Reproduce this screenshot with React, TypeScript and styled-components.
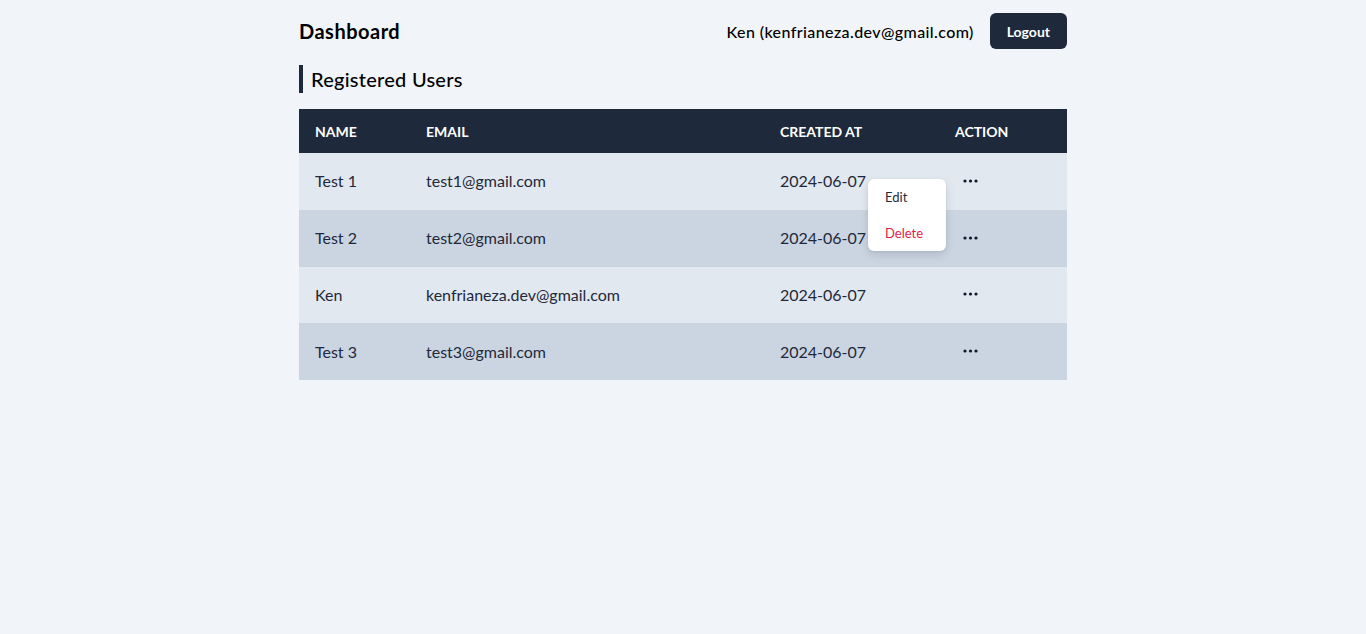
import styled, { createGlobalStyle } from "styled-components";

const GlobalStyle = createGlobalStyle`
  * {
    box-sizing: border-box;
  }
  body {
    margin: 0;
    background: #f1f5f9;
    font-family: "Lato", "Noto Sans", sans-serif;
    color: #0f172a;
  }
`;

interface IUser {
  name: string;
  email: string;
  createdAt: string;
}

const users: IUser[] = [
  { name: "Test 1", email: "test1@gmail.com", createdAt: "2024-06-07" },
  { name: "Test 2", email: "test2@gmail.com", createdAt: "2024-06-07" },
  { name: "Ken", email: "kenfrianeza.dev@gmail.com", createdAt: "2024-06-07" },
  { name: "Test 3", email: "test3@gmail.com", createdAt: "2024-06-07" },
];

const Page = styled.div`
  max-width: 768px;
  margin: 0 auto;
  padding-top: 13px;
`;

const Header = styled.header`
  display: flex;
  align-items: center;
  justify-content: space-between;
  height: 36px;
`;

const Title = styled.h1`
  margin: 0;
  font-size: 20px;
  font-weight: 700;
  letter-spacing: 0.5px;
  color: #000;
`;

const UserBox = styled.div`
  display: flex;
  align-items: center;
  gap: 16px;
  font-size: 16px;
  font-weight: 500;
  letter-spacing: 0.4px;
  color: #000;
`;

const LogoutButton = styled.button`
  height: 36px;
  padding: 0 17px;
  border: none;
  border-radius: 6px;
  background: #1e293b;
  color: #fff;
  font-family: inherit;
  font-size: 14px;
  font-weight: 700;
  letter-spacing: 0;
`;

const SectionTitle = styled.h2`
  margin: 16px 0 16px;
  padding-left: 8px;
  border-left: 4px solid #1e293b;
  font-size: 20px;
  line-height: 28px;
  font-weight: 500;
  letter-spacing: 0.25px;
  color: #000;
`;

const Table = styled.table`
  width: 100%;
  border-collapse: collapse;
  font-size: 16px;
`;

const HeadRow = styled.tr`
  background: #1e293b;
  height: 44px;
`;

const HeadCell = styled.th<{ $width: number }>`
  width: ${(p) => p.$width}px;
  padding: 0 16px;
  text-align: left;
  color: #fff;
  font-size: 14px;
  font-weight: 700;
  text-transform: uppercase;
`;

const Row = styled.tr<{ $striped: boolean }>`
  height: 56.75px;
  background: ${(p) => (p.$striped ? "#cbd5e1" : "#e2e8f0")};
`;

const Cell = styled.td`
  padding: 0 16px;
  color: #1e293b;
  padding-bottom: 1px;
`;

const ActionCell = styled(Cell)`
  position: relative;
`;

const DotsButton = styled.button`
  display: flex;
  align-items: center;
  padding: 0 8px;
  border: none;
  background: none;
  color: #0f172a;
`;

const Menu = styled.div`
  position: absolute;
  top: 26px;
  right: 121px;
  width: 78px;
  background: #fff;
  border-radius: 6px;
  box-shadow: 0 4px 10px rgba(15, 23, 42, 0.12), 0 1px 3px rgba(15, 23, 42, 0.08);
  z-index: 10;
`;

const MenuItem = styled.div<{ $danger?: boolean }>`
  height: 36px;
  display: flex;
  align-items: center;
  padding: 0 17px;
  font-size: 13px;
  color: ${(p) => (p.$danger ? "#e11d48" : "#1e293b")};
`;

function Dots() {
  return (
    <svg width="15" height="4" viewBox="0 0 15 4" fill="currentColor">
      <circle cx="2" cy="2" r="1.6" />
      <circle cx="7.5" cy="2" r="1.6" />
      <circle cx="13" cy="2" r="1.6" />
    </svg>
  );
}

export default function App() {
  return (
    <>
      <GlobalStyle />
      <Page>
        <Header>
          <Title>Dashboard</Title>
          <UserBox>
            <span>Ken (kenfrianeza.dev@gmail.com)</span>
            <LogoutButton>Logout</LogoutButton>
          </UserBox>
        </Header>
        <SectionTitle>Registered Users</SectionTitle>
        <Table>
          <thead>
            <HeadRow>
              <HeadCell $width={111}>Name</HeadCell>
              <HeadCell $width={354}>Email</HeadCell>
              <HeadCell $width={175}>Created At</HeadCell>
              <HeadCell $width={128}>Action</HeadCell>
            </HeadRow>
          </thead>
          <tbody>
            {users.map((user, i) => (
              <Row key={user.email} $striped={i % 2 === 1}>
                <Cell>{user.name}</Cell>
                <Cell>{user.email}</Cell>
                <Cell>{user.createdAt}</Cell>
                <ActionCell>
                  <DotsButton>
                    <Dots />
                  </DotsButton>
                  {i === 0 && (
                    <Menu>
                      <MenuItem>Edit</MenuItem>
                      <MenuItem $danger>Delete</MenuItem>
                    </Menu>
                  )}
                </ActionCell>
              </Row>
            ))}
          </tbody>
        </Table>
      </Page>
    </>
  );
}
